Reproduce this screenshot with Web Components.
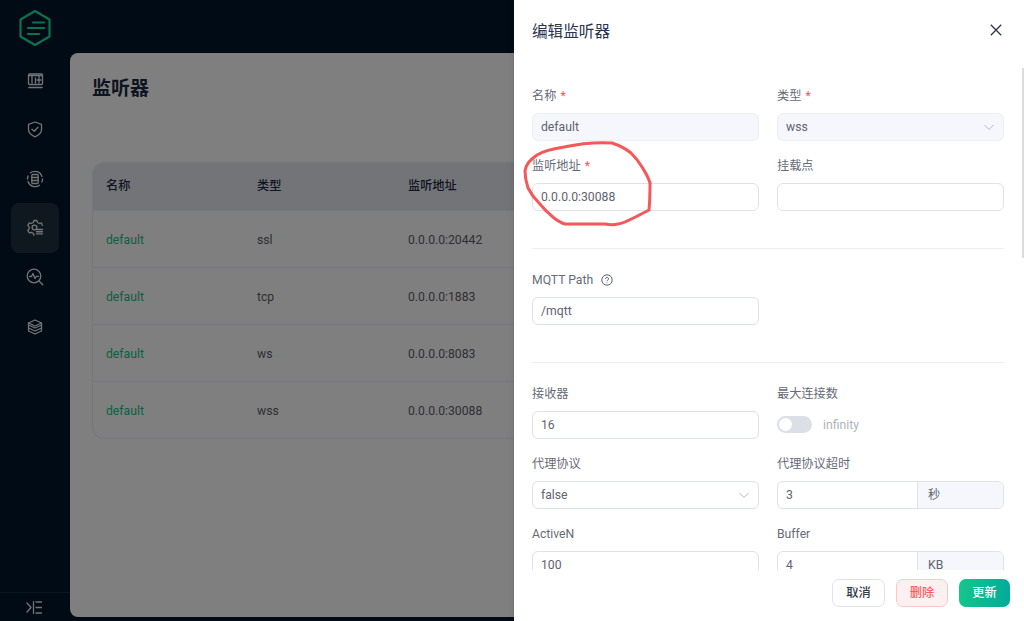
<!DOCTYPE html>
<html lang="zh">
<head>
<meta charset="utf-8">
<title>监听器</title>
<style>
    html, body{
        margin: 0;
        height: 100%;
        overflow: hidden;
        background: #020f1c;
        font: 12.2px/18px Roboto, "Noto Sans CJK SC", sans-serif;
    }
</style>
</head>
<body>
<app-shell></app-shell>
<script>
const ICONS = {
    monitor: `<rect x="3.5" y="4" width="14" height="10.500" rx="1"/><path d="M3.500 5.500h14M7 5.500V13M10.500 8V13M14 5.500V13M12 10h4"/><path d="M4 17.500h13" stroke-width="1.600"/>`,
    shield: `<path d="M10 3l6.500 2.300v5.200c0 3.500-3 5.800-6.500 7.300-3.500-1.500-6.500-3.800-6.500-7.300V5.300z"/><path d="M7 10.200l2.300 2 3.700-3.900"/>`,
    sync: `<path d="M5.500 3.800A7.500 7.500 0 0 1 17 7.500M14.500 16.200A7.500 7.500 0 0 1 3 12.500M2.500 10c0-1 .2-2 .6-3M17.500 10c0 1-.2 2-.6 3"/><rect x="6.800" y="5.500" width="6.400" height="9" rx="1"/><path d="M6.800 8.500h6.400M6.800 11.500h6.400"/>`,
    gear: `<path d="M9 17.300l-.8-2-1.900-1-2 .6L2.800 12.500l1.300-1.600v-2L2.800 7.300l1.500-2.400 2 .6 1.900-1 .8-2h2.800l.8 2 1.900 1 2-.6L17.200 7.300"/><circle cx="9.500" cy="9.500" r="2.400"/><path d="M11.500 11.500h6M11.500 13.700h6M11.500 15.900h6" stroke-width="1.400"/>`,
    search: `<circle cx="9" cy="9" r="6.800"/><path d="M14 14l3.800 3.800"/><path d="M4.500 9.500h2l1.500-3 2 5 1.300-2.200h2.300"/>`,
    layers: `<path d="M10 3l6.500 3v2L10 11 3.500 8V6z"/><path d="M3.500 8v3l6.500 3 6.500-3V8M3.500 11v3l6.500 3 6.500-3v-3M3.500 6L10 9l6.500-3"/>`
};

class AppShell extends HTMLElement{
    constructor(){
        super();
        const shadow = this.attachShadow({ mode: 'open' });
        shadow.innerHTML = `
        <style>
        :host{
            display: grid;
            grid-template-columns: 70px 1fr;
            height: 100vh;
            position: relative;
            overflow: hidden;
        }
        .mask{
            position: absolute;
            inset: 0;
            background: rgba(0, 0, 0, 0.5);
        }
        </style>
        <nav-rail></nav-rail>
        <listener-page></listener-page>
        <div class="mask"></div>
        <edit-drawer></edit-drawer>
        <ink-circle></ink-circle>
        `;
    }
}

class NavRail extends HTMLElement{
    constructor(){
        super();
        const shadow = this.attachShadow({ mode: 'open' });
        const items = ['monitor', 'shield', 'sync', 'gear', 'search', 'layers'].map(name => `
            <div class="item ${name === 'gear' ? 'active' : ''}">
                <svg width="20" height="20" viewBox="0 0 20 20">${ICONS[name]}</svg>
            </div>`).join('');
        shadow.innerHTML = `
        <style>
        :host{
            display: flex;
            flex-direction: column;
            background: #03162a;
        }
        .logo{
            height: 55.200px;
            display: flex;
            justify-content: center;
            align-items: center;
        }
        .menu{
            flex: 1;
            padding: 0 11px;
        }
        .item{
            height: 49.400px;
            display: flex;
            justify-content: center;
            align-items: center;
            border-radius: 8px;
        }
        .active{
            background: #21313f;
        }
        svg{
            fill: none;
            stroke: #fff;
            stroke-width: 1.300;
            stroke-linejoin: round;
            stroke-linecap: round;
            opacity: 0.9;
        }
        .foot{
            height: 27px;
            box-sizing: content-box;
            border-top: 1px solid #1b2a3a;
            display: flex;
            justify-content: center;
            align-items: center;
            padding: 1px 2px 0 0;
        }
        </style>
        <div class="logo">
            <svg width="34" height="38" viewBox="0 0 34 38" style="opacity:1;stroke:#14e79c;stroke-width:2.200">
                <path d="M17 2l14.500 8.500v17L17 36 2.500 27.500v-17z"/>
                <path d="M15 13.500h11M10 19h16M10 25h11"/>
            </svg>
        </div>
        <div class="menu">${items}</div>
        <div class="foot">
            <svg width="16" height="13" viewBox="0 0 16 13">
                <path d="M1 2l4 4.500-4 4.500M7.500 .5v12M10 1h5.500M10 6.500h5.500M10 12h5.500"/>
            </svg>
        </div>
        `;
    }
}

class ListenerPage extends HTMLElement{
    constructor(){
        super();
        const shadow = this.attachShadow({ mode: 'open' });
        const rows = [
            ['ssl', '0.0.0.0:20442'],
            ['tcp', '0.0.0.0:1883'],
            ['ws', '0.0.0.0:8083'],
            ['wss', '0.0.0.0:30088']
        ].map(r => `
            <div class="row">
                <span class="name">default</span><span>${r[0]}</span><span>${r[1]}</span>
            </div>`).join('');
        shadow.innerHTML = `
        <style>
        :host{
            display: block;
            padding: 53px 0 4px;
            min-width: 0;
            background: #03162a;
        }
        .card{
            height: 100%;
            box-sizing: border-box;
            background: #fff;
            border-radius: 8px 0 0 8px;
            padding: 21px 0 0 22px;
        }
        h1{
            margin: 0;
            font-size: 19px;
            line-height: 26px;
            font-weight: 700;
            color: #1d2a44;
            font-family: "Noto Sans CJK SC", sans-serif;
        }
        .table{
            margin-top: 62px;
            border: 1px solid #eceef4;
            border-right: 0;
            border-radius: 12px 0 0 12px;
            overflow: hidden;
        }
        .row, .head{
            display: grid;
            grid-template-columns: 151px 151px 151px 1fr;
            padding-left: 13px;
            align-items: center;
            color: #5c6068;
        }
        .head{
            height: 47px;
            box-sizing: border-box;
            padding-bottom: 2px;
            background: #e6e9f0;
            color: #1d2a44;
            font-weight: 500;
        }
        .row{
            height: 56px;
            box-sizing: content-box;
            border-top: 1px solid #eceef4;
            padding-top: 0;
        }
        .row span{
            position: relative;
            top: 1px;
        }
        .name{
            color: #12c384;
        }
        </style>
        <div class="card">
            <h1>监听器</h1>
            <div class="table">
                <div class="head"><span>名称</span><span>类型</span><span>监听地址</span></div>
                ${rows}
            </div>
        </div>
        `;
    }
}

class FormField extends HTMLElement{
    constructor(){
        super();
        const shadow = this.attachShadow({ mode: 'open' });
        shadow.innerHTML = `
        <style>
        :host{
            display: block;
            min-width: 0;
        }
        .label{
            height: 18px;
            padding-top: 1px;
            margin-bottom: 8px;
            color: #666b77;
            display: flex;
            align-items: center;
        }
        .req{
            color: #f2555a;
            margin-left: 4px;
        }
        svg{
            margin-left: 8px;
        }
        </style>
        <div class="label">
            <span>${this.getAttribute('label')}</span>
            ${this.hasAttribute('required') ? '<span class="req">*</span>' : ''}
            ${this.hasAttribute('help') ? `<svg width="12" height="12" viewBox="0 0 12 12" fill="none" stroke="#5a606c">
                <circle cx="6" cy="6" r="5.200"/>
                <path d="M4.500 4.800a1.500 1.500 0 1 1 2.300 1.300c-.6.300-.8.600-.8 1.100M6 8.500v.7"/>
            </svg>` : ''}
        </div>
        <slot></slot>
        `;
    }
}

class TextBox extends HTMLElement{
    constructor(){
        super();
        const shadow = this.attachShadow({ mode: 'open' });
        const unit = this.getAttribute('unit');
        const chevron = this.hasAttribute('select') ? `<svg width="12" height="12" viewBox="0 0 12 12" fill="none" stroke="#b4b8c2">
                <path d="M1.500 4l4.500 4.500L10.500 4"/></svg>` : '';
        shadow.innerHTML = `
        <style>
        :host{
            display: flex;
            height: 28px;
            box-sizing: border-box;
            border: 1px solid #dfe2ea;
            border-radius: 6px;
            background: #fff;
            color: #5f6470;
            overflow: hidden;
        }
        :host([disabled]){
            background: #f5f7fc;
            border-color: #eceef5;
        }
        .val{
            flex: 1;
            padding: 0 8px;
            display: flex;
            align-items: center;
            justify-content: space-between;
        }
        .unit{
            width: 86px;
            box-sizing: border-box;
            padding-left: 10px;
            background: #f5f7fc;
            border-left: 1px solid #dfe2ea;
            display: flex;
            align-items: center;
        }
        </style>
        <div class="val"><span>${this.getAttribute('value') || ''}</span>${chevron}</div>
        ${unit ? `<div class="unit">${unit}</div>` : ''}
        `;
    }
}

class ToggleSwitch extends HTMLElement{
    constructor(){
        super();
        const shadow = this.attachShadow({ mode: 'open' });
        shadow.innerHTML = `
        <style>
        :host{
            display: flex;
            align-items: center;
            gap: 11px;
            height: 28px;
            color: #afb3bb;
        }
        .track{
            width: 35px;
            height: 17px;
            border-radius: 9px;
            background: #dcdfe6;
            padding: 2px;
            box-sizing: border-box;
        }
        .knob{
            width: 13px;
            height: 13px;
            border-radius: 50%;
            background: #fff;
        }
        </style>
        <div class="track"><div class="knob"></div></div>
        <slot></slot>
        `;
    }
}

class EditDrawer extends HTMLElement{
    constructor(){
        super();
        const shadow = this.attachShadow({ mode: 'open' });
        shadow.innerHTML = `
        <style>
        :host{
            position: absolute;
            top: 0;
            right: 0;
            bottom: 0;
            width: 510px;
            display: flex;
            flex-direction: column;
            background: #fff;
            box-shadow: 0 0 8px rgba(0, 0, 0, 0.12);
        }
        header{
            height: 60px;
            flex: none;
            display: flex;
            justify-content: space-between;
            align-items: center;
            padding: 0 22px 0 18px;
            font: 400 15.600px/22px "Noto Sans CJK SC", sans-serif;
            color: #2b3450;
        }
        .body{
            flex: 1;
            min-height: 0;
            overflow: hidden;
            padding: 26px 20px 0 18px;
        }
        .grid{
            display: grid;
            grid-template-columns: 227px 227px;
            column-gap: 18px;
            row-gap: 15.300px;
        }
        hr{
            border: 0;
            height: 1px;
            background: #eceef4;
            margin: 36.700px 0 21px;
        }
        .thumb{
            position: absolute;
            top: 68px;
            right: 0;
            width: 2px;
            height: 190px;
            background: #dcdcdc;
        }
        footer{
            height: 51px;
            flex: none;
            box-sizing: border-box;
            padding: 9px 14px 0 0;
            display: flex;
            justify-content: flex-end;
            gap: 11px;
        }
        </style>
        <header>
            <span>编辑监听器</span>
            <svg width="12" height="12" viewBox="0 0 12 12" fill="none" stroke="#2b3450" stroke-width="1.300">
                <path d="M.8 .8l10.400 10.400M11.200 .8L.8 11.200"/>
            </svg>
        </header>
        <div class="thumb"></div>
        <div class="body">
            <div class="grid">
                <form-field label="名称" required><text-box value="default" disabled></text-box></form-field>
                <form-field label="类型" required><text-box value="wss" select disabled></text-box></form-field>
                <form-field label="监听地址" required><text-box value="0.0.0.0:30088"></text-box></form-field>
                <form-field label="挂载点"><text-box></text-box></form-field>
            </div>
            <hr>
            <div class="grid">
                <form-field label="MQTT Path" help><text-box value="/mqtt"></text-box></form-field>
            </div>
            <hr>
            <div class="grid">
                <form-field label="接收器"><text-box value="16"></text-box></form-field>
                <form-field label="最大连接数"><toggle-switch>infinity</toggle-switch></form-field>
                <form-field label="代理协议"><text-box value="false" select></text-box></form-field>
                <form-field label="代理协议超时"><text-box value="3" unit="秒"></text-box></form-field>
                <form-field label="ActiveN"><text-box value="100"></text-box></form-field>
                <form-field label="Buffer"><text-box value="4" unit="KB"></text-box></form-field>
            </div>
        </div>
        <footer>
            <action-button>取消</action-button>
            <action-button kind="danger">删除</action-button>
            <action-button kind="primary">更新</action-button>
        </footer>
        `;
    }
}

class ActionButton extends HTMLElement{
    constructor(){
        super();
        const shadow = this.attachShadow({ mode: 'open' });
        shadow.innerHTML = `
        <style>
        :host{
            display: flex;
            justify-content: center;
            align-items: center;
            height: 28px;
            width: 53px;
            box-sizing: border-box;
            border: 1px solid #dfe2ea;
            border-radius: 7px;
            background: #fff;
            color: #333a48;
            font-weight: 500;
        }
        :host([kind="danger"]){
            width: 52px;
            background: #fef0f0;
            border-color: #fbc8c8;
            color: #f4605f;
        }
        :host([kind="primary"]){
            width: 51px;
            border: 0;
            color: #fff;
            background: linear-gradient(100deg, #12c98a, #02a99a);
        }
        </style>
        <slot></slot>
        `;
    }
}

// the hand drawn red ring lying over the form
class InkCircle extends HTMLElement{
    constructor(){
        super();
        const shadow = this.attachShadow({ mode: 'open' });
        shadow.innerHTML = `
        <style>
        :host{
            position: absolute;
            left: 0;
            top: 0;
            pointer-events: none;
        }
        </style>
        <svg width="1024" height="621" viewBox="0 0 1024 621" fill="none" stroke="#f4585a" stroke-width="3" stroke-linecap="round" stroke-linejoin="round">
            <path d="M612 143C595 142 578 144 564 147C552 149 543 151 537 155C530 160 526 164 525 171C525 178 526 182 528 188C531 194 535 199 539 203C544 209 549 214 554 218C558 221 561 223 565 224L605 224C610 225 614 225 618 224C622 224 634 218 649 210C650 200 650 192 650 183C648 176 645 172 642 167C639 162 636 158 631 153C625 148 618 145 612 143Z"/>
        </svg>
        `;
    }
}

customElements.define("nav-rail", NavRail);
customElements.define("listener-page", ListenerPage);
customElements.define("form-field", FormField);
customElements.define("text-box", TextBox);
customElements.define("toggle-switch", ToggleSwitch);
customElements.define("action-button", ActionButton);
customElements.define("edit-drawer", EditDrawer);
customElements.define("ink-circle", InkCircle);
customElements.define("app-shell", AppShell);
</script>
</body>
</html>
